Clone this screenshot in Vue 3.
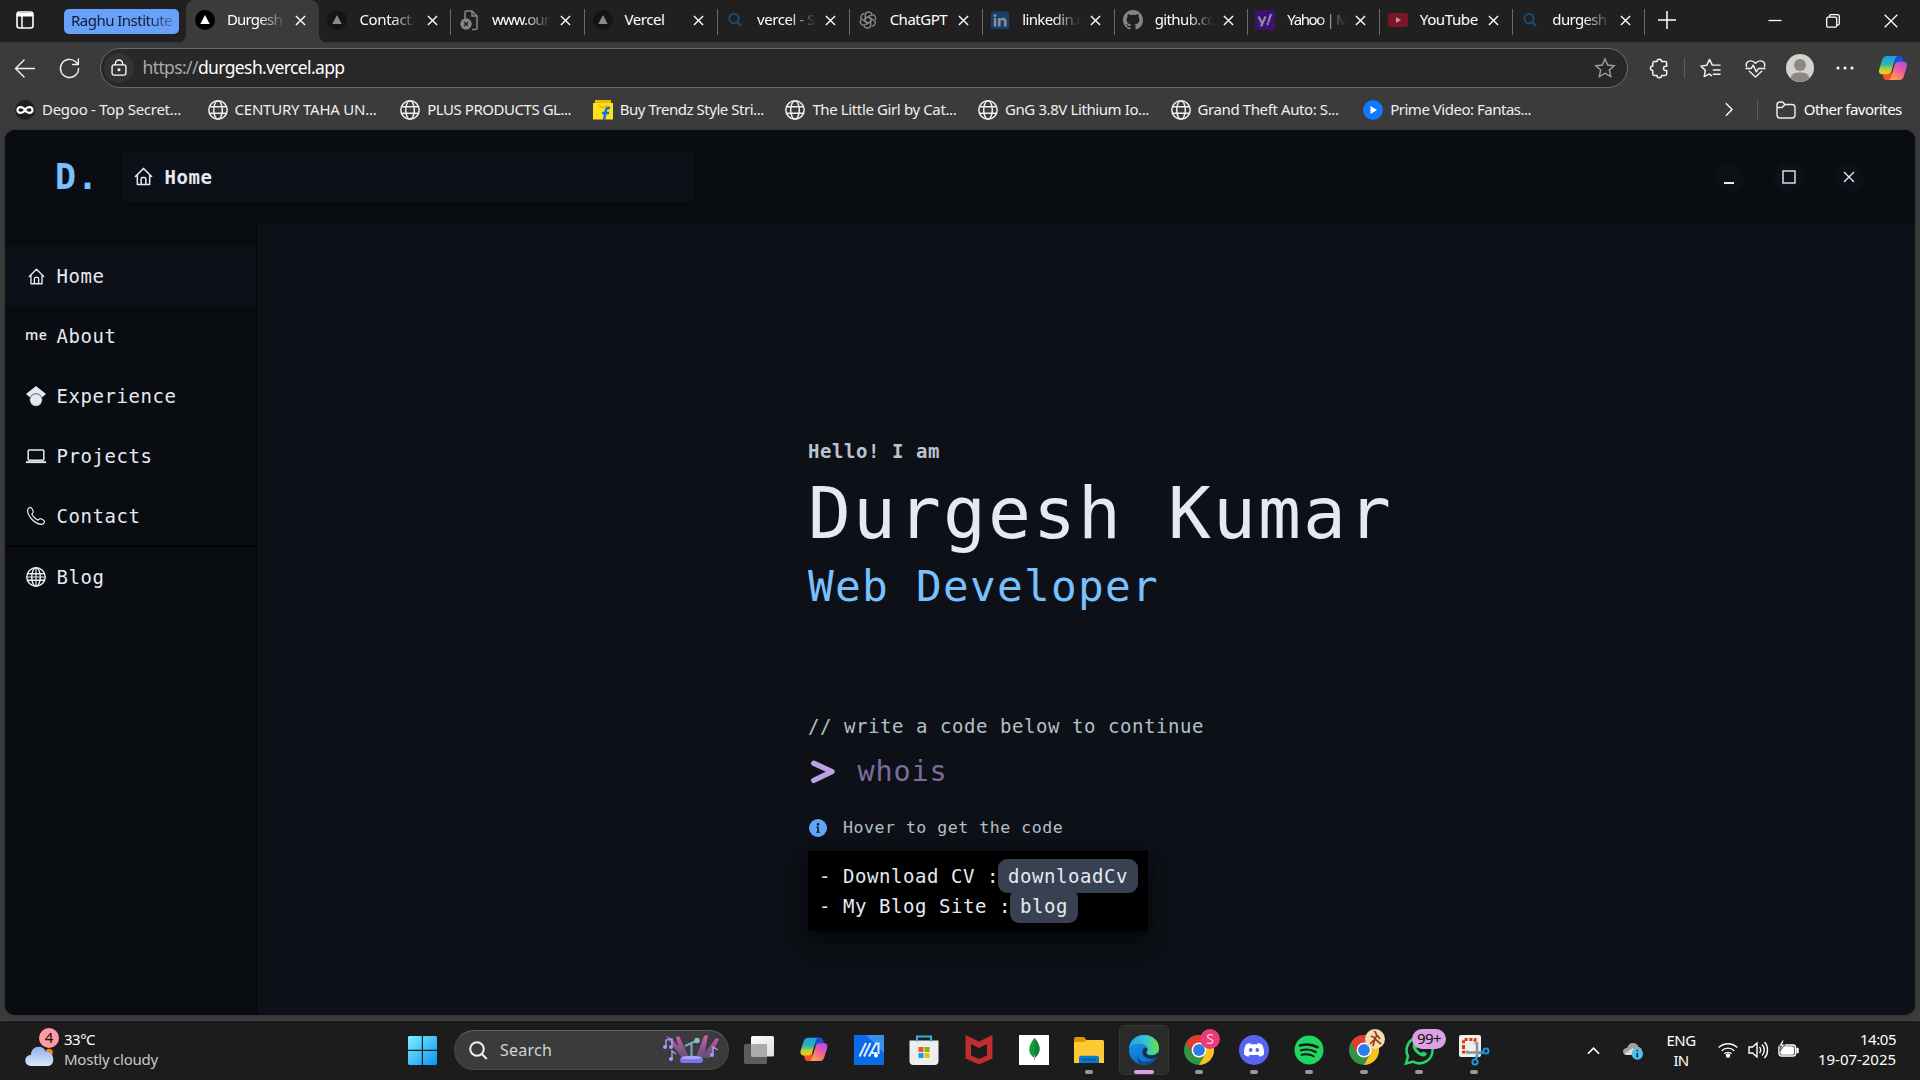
<script setup>
const vFit = {
  mounted(el, { value }) {
    if (!value) return
    const natural = el.getBoundingClientRect().width
    el.style.letterSpacing = (value - natural) / el.textContent.length + 'px'
  },
}

const triangle = (bg, fg) => `<circle cx="10" cy="10" r="10" fill="${bg}"/><path d="M10 5l4.700 9H5.300z" fill="${fg}"/>`
const globe = '<g fill="none" stroke="currentColor" stroke-width="1.500"><circle cx="10" cy="10" r="9.200"/><ellipse cx="10" cy="10" rx="4.300" ry="9.200"/><path d="M1.600 6.800h16.800M1.600 13.200h16.800"/></g>'
const search = '<g fill="none" stroke="#1d4e79" stroke-width="1.800"><circle cx="9" cy="8.500" r="4.600"/><path d="M12.300 12l4 4"/></g>'
const copilot = (k) => `<defs><linearGradient id="${k}a" x1="0" y1="0" x2="0" y2="1"><stop offset="0" stop-color="#1b9df0"/><stop offset=".45" stop-color="#2bb5a8"/><stop offset=".72" stop-color="#b4d144"/><stop offset="1" stop-color="#ffc60a"/></linearGradient><linearGradient id="${k}b" x1="1" y1="0" x2=".3" y2="1"><stop offset="0" stop-color="#a04cf5"/><stop offset=".5" stop-color="#ef5aa0"/><stop offset="1" stop-color="#ffa24a"/></linearGradient></defs><path d="M16 3h6c2 0 3 1.200 3.600 3l1 4h-4c-1.700 0-4 .8-5 3.300z" fill="#1a4ed8"/><path d="M15 28H9c-2 0-3-1.200-3.500-3L4.500 21h4.500c1.700 0 3.600-.8 4.600-3.300z" fill="#f4522d"/><path d="M9.500 3h11c-1.600.2-2.400 1.300-2.900 3l-3.600 12c-.7 2.300-2 4-4.500 4H4.300C1.300 22 .5 19.500 1.300 16.800L4.500 6.500C5.200 4.300 6.800 3 9.500 3z" fill="url(#${k}a)"/><path d="M21.500 28h-11c1.600-.2 2.400-1.300 2.900-3L17 13c.7-2.300 2-4 4.500-4h5.200c3 0 3.800 2.500 3 5.200l-3.200 10.300c-.7 2.200-2.300 3.500-5 3.500z" fill="url(#${k}b)"/>`
const chrome = '<circle cx="15" cy="15" r="15" fill="#2f9446"/><path d="M15 8h13.300A15 15 0 0 1 15 30l6.200-11z" fill="#fcc31b"/><path d="M8.500 18.700L2 7.500A15 15 0 0 1 28.300 8H15z" fill="#e33b2e"/><circle cx="15" cy="15" r="7.400" fill="#fff"/><circle cx="15" cy="15" r="5.900" fill="#2b7de9"/>'
const home = '<g fill="none" stroke="currentColor" stroke-width="1.600" stroke-linejoin="round" stroke-linecap="round"><path d="M1.500 10L10 1.500 18.500 10M3.500 8.500v10h13v-10"/><path d="M7.500 18v-5.500c0-1 .5-1.500 1.500-1.500h2c1 0 1.500.5 1.500 1.500V18"/></g>'

const tabs = [
  { t: 'Durgesh', w: 55, a: true, f: 1, i: triangle('#000', '#fff') },
  { t: 'Contact', w: 52, f: 1, i: triangle('#141414', '#8a8a8a') },
  { t: 'www.our', w: 57, f: 1, i: '<g fill="none" stroke="#858585" stroke-width="1.500"><path d="M5 9V2.500C5 1.500 5.500 1 6.500 1H12l5 5v12c0 1-.5 1.500-1.500 1.500H12M12 1v5h5"/></g><circle cx="6" cy="14" r="5.700" fill="#858585"/><path d="M4 12l4 4M8 12l-4 4" stroke="#202020" stroke-width="1.400"/>' },
  { t: 'Vercel', w: 40, i: triangle('#141414', '#8a8a8a') },
  { t: 'vercel - S', w: 58, f: 1, i: search },
  { t: 'ChatGPT', w: 57.5, i: '<g fill="none" stroke="#858585" stroke-width="1.400"><path id="gp" d="M7.200 11.700V5.500c0-2 1.600-3.500 3.500-3.500 1.400 0 2.500.7 3.100 1.800M7.200 8.500l5.500-3.100c1.700-1 3.700-.3 4.600 1.200.7 1.200.7 2.500.1 3.600"/><use href="#gp" transform="rotate(120 10 10)"/><use href="#gp" transform="rotate(240 10 10)"/><path d="M10 6.800l2.800 1.600v3.200L10 13.200l-2.800-1.600V8.400z"/></g>' },
  { t: 'linkedin.c', w: 61, f: 1, i: '<rect x="1" y="1.500" width="18" height="17.500" rx="1.500" fill="#18406c"/><g fill="#8a8f94"><circle cx="5" cy="5.500" r="1.500"/><path d="M3.800 8h2.500v8.500H3.800zM8 8h2.300v1.200C12 7 16.500 7.300 16.500 11.500v5H14v-4.600c0-2.600-3.500-2.500-3.500 0v4.600H8z"/></g>' },
  { t: 'github.co', w: 61, f: 1, i: '<path transform="scale(1.250)" fill="#858585" d="M8 0C3.580 0 0 3.580 0 8c0 3.540 2.290 6.530 5.470 7.590.4.070.55-.17.55-.38 0-.19-.01-.82-.01-1.490-2.010.37-2.530-.49-2.690-.94-.09-.23-.48-.94-.82-1.130-.28-.15-.68-.52-.01-.53.63-.01 1.080.58 1.230.82.72 1.210 1.870.87 2.330.66.07-.52.28-.87.51-1.070-1.780-.2-3.640-.89-3.640-3.950 0-.87.31-1.590.82-2.150-.08-.2-.36-1.020.08-2.120 0 0 .67-.21 2.200.82.64-.18 1.320-.27 2-.27s1.360.09 2 .27c1.530-1.040 2.200-.82 2.200-.82.44 1.100.16 1.920.08 2.120.51.56.82 1.270.82 2.150 0 3.070-1.870 3.750-3.650 3.950.29.25.54.73.54 1.480 0 1.070-.01 1.930-.01 2.200 0 .21.15.46.55.38A8 8 0 0 0 16 8c0-4.420-3.580-8-8-8z"/>' },
  { t: 'Yahoo | M', w: 61, f: 1, i: '<rect width="20" height="20" fill="#3b1273"/><path d="M3.500 6.500l3.300 6.500M10.500 6.500L6 16.500M13.200 12.500L16 4" fill="none" stroke="#918a99" stroke-width="2.200"/><circle cx="12.700" cy="14" r="1.300" fill="#918a99"/>' },
  { t: 'YouTube', w: 58, i: '<rect y="3" width="20" height="14" rx="3" fill="#7c1525"/><path d="M8 7v6l5-3z" fill="#a9a0a2"/>' },
  { t: 'durgesh', w: 54, f: 1, i: search },
]

const bookmarks = [
  { t: 'Degoo - Top Secret...', w: 139, i: '<circle cx="10" cy="10" r="10" fill="#202020"/><path d="M10 10C8 6.500 2.500 6 2.500 10S8 13.500 10 10s7.500-4 7.500 0-5.500 3.500-7.500 0z" fill="none" stroke="#fff" stroke-width="2.200"/>' },
  { t: 'CENTURY TAHA UN...', w: 142, i: globe },
  { t: 'PLUS PRODUCTS GL...', w: 144, i: globe },
  { t: 'Buy Trendz Style Stri...', w: 144, i: '<path d="M2 0h16v4H2z" fill="#f2b900"/><path d="M0 3h20v16.500H0z" fill="#ffe11b"/><path d="M6 5c1 3 6 3 8 0" fill="none" stroke="#f0b400" stroke-width="1.500"/><path d="M17 8c-3-.5-4 .5-4.300 3L11 20M9 13h7" fill="none" stroke="#1773d6" stroke-width="2.600"/>' },
  { t: 'The Little Girl by Cat...', w: 144, i: globe },
  { t: 'GnG 3.8V Lithium Io...', w: 144, i: globe },
  { t: 'Grand Theft Auto: S...', w: 141, i: globe },
  { t: 'Prime Video: Fantas...', w: 141, i: '<circle cx="10" cy="10" r="10" fill="#0f79ff"/><path d="M7.500 6v8l6.500-4z" fill="#fff"/>' },
]

const nav = [
  { t: 'Home', a: true, i: home, s: 17 },
  { t: 'About', me: true },
  { t: 'Experience', s: 20, i: '<path d="M10 0l10 8-4 3.500H4L0 8z" fill="currentColor"/><circle cx="10" cy="14" r="6.300" fill="currentColor" stroke="#090c10" stroke-width=".6"/>' },
  { t: 'Projects', s: 20, i: '<rect x="2.200" y="4" width="15.600" height="10.300" rx="1" fill="none" stroke="currentColor" stroke-width="1.500"/><path d="M0 15.200h20v1.900H0z" fill="currentColor"/>' },
  { t: 'Contact', s: 20, i: '<path d="M4.500 1.400C3.300 1.300 1.500 3 1.600 4.500 2 11 9 18 15.500 18.400c1.400.1 3-1.600 3-2.800 0-1.300-3.800-3.300-4.800-2.800l-1.800 1.300c-1.500-.4-5.500-4.200-6-6l1.200-1.800c.6-1-1.400-4.800-2.600-4.900z" fill="none" stroke="currentColor" stroke-width="1.200"/>' },
  { t: 'Blog', s: 20, line: true, i: globe.replace('<path ', '<path d="M10 1v18M1 10h18" stroke-width="1.200"/><path ') },
]

const apps = [
  { i: '<defs><linearGradient id="tv" x1="0" y1="0" x2="1" y2="1"><stop stop-color="#fff"/><stop offset="1" stop-color="#ddd"/></linearGradient></defs><rect y="9" width="23" height="20" rx="1.500" fill="#5d5d5d"/><rect x="7" y="1" width="23" height="20.500" rx="1.500" fill="url(#tv)"/><path d="M7 9h16v12.500H8.500c-1 0-1.500-.5-1.500-1.500z" fill="#ababab"/>' },
  { i: '<g transform="translate(.5 0) scale(.93)">' + copilot('t') + '</g>' },
  { i: '<rect width="30" height="30" fill="#0a6be6"/><path d="M12 0h18v18z" fill="#3c8df0"/><path d="M5.500 21.500L12 8" stroke="#dcecff" stroke-width="2"/><path d="M10 21.500L16.500 8" stroke="#dcecff" stroke-width="2"/><path d="M15 21.500L22 8.500h2.500V19M18 18h5" fill="none" stroke="#dcecff" stroke-width="2"/><circle cx="22" cy="20.500" r="2" fill="#fff"/>' },
  { i: '<path d="M8 7V1.500h14V7" fill="none" stroke="#2ab1e6" stroke-width="2"/><path d="M.5 5.500h29V26c0 2.500-1.300 4-4 4h-21c-2.700 0-4-1.500-4-4z" fill="#eee"/><path d="M9.500 12h5v5h-5z" fill="#f25022"/><path d="M15.500 12h5v5h-5z" fill="#7fba00"/><path d="M9.500 18h5v5h-5z" fill="#00a4ef"/><path d="M15.500 18h5v5h-5z" fill="#ffb900"/><path d="M8 6.500V5M22 6.500V5" stroke="#2ab1e6" stroke-width="2"/>' },
  { i: '<path d="M1.500 0L15 6.500 28.500 0v23.500L15 29.500 1.500 23.500zM7 9v11.500l8 3.500 8-3.500V9l-8 4z" fill="#c02d2d" fill-rule="evenodd"/>' },
  { i: '<path d="M0 0h30v30H0z" fill="#fff"/><path d="M15.500 3c7.500 8 6 16 0 20-7-4-7-12 0-20z" fill="#119b3d"/><path d="M15.500 3c7.500 8 6 16 0 20z" fill="#168134"/><path d="M15.500 20v5" stroke="#aaa"/>' },
  { r: 1, i: '<path d="M0 4c0-1.300.7-2 2-2h8l3 3.500V10H0z" fill="#d99a00"/><path d="M0 7h10l3-2h15c1.300 0 2 .6 2 2v21H0z" fill="#ffc933"/><path d="M5 28v-5c0-1.500.8-2.300 2.300-2.300h15.400c1.500 0 2.300.8 2.300 2.300v5z" fill="#087ad0"/><path d="M8 24.500h14" stroke="#0b5593" stroke-width="1.500"/>' },
  { r: 1, a: true, i: '<defs><linearGradient id="e1"><stop stop-color="#21a1e8"/><stop offset=".55" stop-color="#35c4d6"/><stop offset="1" stop-color="#6be33f"/></linearGradient><linearGradient id="e2" x1="0" y1="0" x2=".3" y2="1"><stop stop-color="#1fa0e4"/><stop offset="1" stop-color="#0a6fd0"/></linearGradient></defs><circle cx="15" cy="15" r="15" fill="url(#e2)"/><path d="M8.500 20C9 27 17 29.500 27.500 23A15 15 0 0 1 12 29.700C8 28 8 23 8.500 20z" fill="#104b94"/><path d="M0 13C1 5 7.500 0 15 0c9 0 15 6 15 13 0 4.500-3.500 7-7.500 7-3.500 0-5-1.300-5-2.600 0-1 1.200-1.300 1.200-3.200 0-3-3.500-5.700-7.700-5.700-5 0-9 2-11 4.500z" fill="url(#e1)"/><path d="M17.300 17.600c0 1.500 1.700 2.900 5.200 2.900 3 0 5.500-1.300 6.700-3.500.8 1.500.3 4-1.700 6-6.500 2.500-14-.2-14-6 0-2 1-3.700 2.500-4.500 1.500.2 2.600 1.200 2.600 2.400 0 1.200-1.300 1.400-1.300 2.700z" fill="#173049"/>' },
  { r: 1, b: 'S', bc: 'pink', i: chrome },
  { r: 1, i: '<circle cx="15" cy="15" r="15" fill="#5764f2"/><path d="M11 8c-2 .3-3.500 1-4 1.500-1.500 2.500-2.300 6-2 10 1.500 1.200 3 2 4.500 2.300l1-1.800h9l1 1.800c1.500-.3 3-1.100 4.500-2.300.3-4-.5-7.500-2-10-.5-.5-2-1.200-4-1.500l-.7 1.300h-6.600z" fill="#fff"/><ellipse cx="11.700" cy="15" rx="1.800" ry="2" fill="#5764f2"/><ellipse cx="18.300" cy="15" rx="1.800" ry="2" fill="#5764f2"/>' },
  { r: 1, i: '<circle cx="15" cy="15" r="14.500" fill="#1fd760"/><g fill="none" stroke="#151a17" stroke-linecap="round"><path d="M6 10.500c6-1.700 12.500-1 17.500 1.700" stroke-width="2.700"/><path d="M7 15.300c5-1.400 10.500-.8 14.700 1.700" stroke-width="2.200"/><path d="M7.500 19.700c4.500-1 8.700-.5 12.300 1.600" stroke-width="1.900"/></g>' },
  { r: 1, bc: 'cream', i: chrome },
  { r: 1, b: '99+', bc: 'lilac', i: '<path d="M2 28.500l2-7.300A13 13 0 1 1 9.200 26.600z" fill="none" stroke="#25d366" stroke-width="2.600"/><path d="M10 8c-3 2-1 7 3 10.500 4 3.300 8 4 9.500 1.200.5-1.500 0-2-3.500-3.200-1.300 1.500-1.500 1.800-4.500-.6-2.500-2.400-2.300-3-1-4.400C12 8 11 7.500 10 8z" fill="#25d366"/>' },
  { r: 1, i: '<rect width="22" height="22" rx="2" fill="#efefef"/><path d="M4.500 13V4.500H16V9M4.500 11v6H9" fill="none" stroke="#d83b01" stroke-width="3" stroke-dasharray="3 1.800"/><path d="M18 7v16M7 17.500h17" stroke="#8d949a" stroke-width="2.600"/><circle cx="27" cy="16" r="2.600" fill="none" stroke="#1b9de2" stroke-width="1.900"/><circle cx="16" cy="27" r="2.600" fill="none" stroke="#1b9de2" stroke-width="1.900"/><path d="M20 18.500l5-1.800M18 20l-1.300 5" stroke="#1b9de2" stroke-width="1.800"/>' },
]
const copilotTop = copilot('c')
</script>

<template>
  <div class="screen">
    <header class="tabstrip">
      <svg class="side" viewBox="0 0 18 18"><rect x="1" y="1" width="16" height="16" rx="2.500" fill="none" stroke="#fff" stroke-width="1.600"/><path d="M1 2h16v3.500H1z" fill="#fff"/><path d="M6 5v12" stroke="#fff" stroke-width="1.500"/></svg>
      <div class="group"><span v-fit="101">Raghu Institute</span></div>
      <div v-for="(tab, n) in tabs" :key="n" class="tab" :class="{ active: tab.a, sep: n > 0 }">
        <svg class="fav" viewBox="0 0 20 20" v-html="tab.i"></svg>
        <div class="label" :class="{ fade: tab.f }"><span v-fit="tab.w">{{ tab.t }}</span></div>
        <svg class="x" viewBox="0 0 12 12"><path d="M1 1l10 10M11 1L1 11"/></svg>
      </div>
      <svg class="plus" viewBox="0 0 18 18"><path d="M9 0v18M0 9h18"/></svg>
      <div class="wins">
        <svg viewBox="0 0 14 14"><path d="M.5 6.500h13"/></svg>
        <svg viewBox="0 0 14 14"><rect x=".7" y="3.200" width="10" height="10" rx="1.500"/><path d="M3.500 3V2c0-1 .5-1.300 1.300-1.300h6.400c1.400 0 2.100.7 2.100 2V9.500c0 1-.5 1.500-1.500 1.500h-1"/></svg>
        <svg viewBox="0 0 14 14"><path d="M.7.7l12.600 12.600M13.300.7L.7 13.300"/></svg>
      </div>
    </header>

    <div class="toolbar">
      <svg class="ico back" viewBox="0 0 22 20"><path d="M21 10H1.500M10 1L1 10l9 9"/></svg>
      <svg class="ico reload" viewBox="0 0 22 22"><path d="M20.500 11A9.500 9.500 0 1 1 17.500 4L20 6.500M20.300 1v5.800h-6"/></svg>
      <div class="address">
        <div class="lock"><svg viewBox="0 0 18 20"><rect x="1.200" y="6.500" width="15.600" height="11.500" rx="2"/><path d="M5 6.500V5a4 4 0 0 1 8 0v1.500"/><circle cx="9" cy="12" r="1" fill="#fff"/></svg></div>
        <span class="url" v-fit="202"><i>https://</i>durgesh.vercel.app</span>
        <svg class="star" viewBox="0 0 20 20"><path d="M10 1l2.700 6 6.500.7-4.900 4.300 1.400 6.500L10 15.200l-5.700 3.300L5.700 12 .8 7.700 7.300 7z"/></svg>
      </div>
      <svg class="ico puzzle" viewBox="0 0 20 20"><path d="M8 3.500a2.300 2.300 0 0 1 4.600 0h3.400c1 0 1.700.7 1.700 1.700v3h-1a2.200 2.200 0 0 0 0 4.400h1v3.200c0 1-.7 1.700-1.700 1.700h-3.400a2.300 2.300 0 0 1-4.600 0H5.500c-1 0-1.700-.7-1.700-1.700v-3.200a2.300 2.300 0 0 1 0-4.600V5.200c0-1 .7-1.700 1.700-1.700z"/></svg>
      <div class="vsep"></div>
      <svg class="ico favs" viewBox="0 0 22 20"><path d="M12 18l-2-1.800-5.600 2.800L5.600 12.500.9 8l6.200-.8L10 1l2.900 6H21M14 12h7M14 16.500h7"/></svg>
      <svg class="ico heart" viewBox="0 0 22 20"><path d="M1.500 8C0 2 7 0 11 4.500 15 0 22 2 20.500 8M1 10h5.500l2-3.500 3.500 7 2-3.500H21M4.500 13l6.500 6 6.500-6"/></svg>
      <svg class="avatar" viewBox="0 0 28 28"><circle cx="14" cy="14" r="14" fill="#d4d1ce"/><circle cx="14" cy="11" r="6" fill="#8c8985"/><path d="M4.500 24c1-4.500 5-5.500 9.500-5.500s8.500 1 9.500 5.500a14 14 0 0 1-19 0z" fill="#8c8985"/></svg>
      <svg class="dots" viewBox="0 0 18 4"><circle cx="2" cy="2" r="1.500"/><circle cx="9" cy="2" r="1.500"/><circle cx="16" cy="2" r="1.500"/></svg>
      <svg class="cop" viewBox="0 0 31 31" v-html="copilotTop"></svg>
    </div>

    <div class="bookmarks">
      <div v-for="b in bookmarks" :key="b.t" class="bm">
        <svg viewBox="0 0 20 20" v-html="b.i"></svg><span v-fit="b.w">{{ b.t }}</span>
      </div>
      <svg class="chev" viewBox="0 0 9 16"><path d="M1 1l7 7-7 7"/></svg>
      <div class="vsep"></div>
      <svg class="folder" viewBox="0 0 20 18"><path d="M1 4c0-2 1-3 3-3h2.500L9 3.500h7c2 0 3 1 3 3V14c0 2-1 3-3 3H4c-2 0-3-1-3-3zM1 6.500h5L9 3.500"/></svg>
      <span class="other" v-fit="98">Other favorites</span>
    </div>

    <div class="page">
      <div class="top">
        <div class="logo">D.</div>
        <div class="crumb"><svg viewBox="0 0 20 20" v-html="home"></svg><span>Home</span></div>
        <div class="ctl">
          <div><svg viewBox="0 0 14 14"><path d="M2 13h10" stroke-width="2"/></svg></div>
          <div><svg viewBox="0 0 14 14"><rect x="1" y="1" width="12" height="12" stroke-width="1.400"/></svg></div>
          <div><svg viewBox="0 0 14 14"><path d="M2 2l10 10M12 2L2 12" stroke-width="1.400"/></svg></div>
        </div>
      </div>
      <div class="body">
        <nav>
          <div v-for="n in nav" :key="n.t" class="item" :class="{ on: n.a, line: n.line }">
            <div class="ic"><span v-if="n.me" class="me">me</span><svg v-else viewBox="0 0 20 20" :width="n.s" :height="n.s" v-html="n.i"></svg></div>
            <span>{{ n.t }}</span>
          </div>
        </nav>
        <main>
          <div class="hello">Hello! I am</div>
          <h1>Durgesh Kumar</h1>
          <h2>Web Developer</h2>
          <div class="comment">// write a code below to continue</div>
          <div class="prompt"><svg viewBox="0 0 24 24"><path d="M2.800 3.200L21 11.600 2.800 20.400"/></svg><span>whois</span></div>
          <div class="hint"><svg viewBox="0 0 18 18"><circle cx="9" cy="9" r="9" fill="#60a5fa"/><circle cx="9" cy="5.200" r="1.200"/><path d="M7.400 7.600h2.400v5.200h1v1H7.300v-1h1V8.600h-.9z"/></svg><span>Hover to get the code</span></div>
          <div class="codes">
            <div>- Download CV :<b>downloadCv</b></div>
            <div>- My Blog Site :<b>blog</b></div>
          </div>
        </main>
      </div>
    </div>

    <footer>
      <div class="weather">
        <svg viewBox="0 0 32 24"><defs><linearGradient id="cl" x1="0" y1="0" x2="0" y2="1"><stop stop-color="#8fb0ea"/><stop offset="1" stop-color="#dce8fa"/></linearGradient></defs><circle cx="26" cy="8" r="4" fill="#f7820a"/><path d="M7 23c-4 0-7-2.300-7-6 0-3.600 2.600-6 6-6C6.500 5 10 2 14.500 2c4 0 6.500 2 7.800 5.300C27 7 30.500 10.500 30.500 15.500c0 5-3 7.500-7 7.500z" fill="url(#cl)"/></svg>
        <em>4</em>
        <div><span class="w1" v-fit="31">33°C</span><span class="w2" v-fit="94">Mostly cloudy</span></div>
      </div>
      <svg class="win" viewBox="0 0 29 29"><defs><linearGradient id="wg" x1="0" y1="0" x2="1" y2="1"><stop stop-color="#7cf0ff"/><stop offset="1" stop-color="#0a93f7"/></linearGradient></defs><path d="M1 0h12.800v13.800H0V1zM15 0h13l1 1v12.800H15zM0 15h13.800v14H1l-1-1zM15 15h14v13l-1 1H15z" fill="url(#wg)"/></svg>
      <div class="search">
        <svg class="mag" viewBox="0 0 19 19"><circle cx="8" cy="8" r="6.800"/><path d="M12.800 13l5 5"/></svg>
        <span v-fit="52">Search</span>
        <svg class="art" viewBox="0 0 56 28"><defs><linearGradient id="bm" x1="0" y1="0" x2="0" y2="1"><stop stop-color="#d65eb5"/><stop offset="1" stop-color="#7c5c94" stop-opacity=".6"/></linearGradient></defs><path d="M3 0l5 2 17 19h-7zM13 1l3-1 10 21h-8zM41 0l4-1-4 22h-8zM53 2l3 1-9 19h-9z" fill="url(#bm)"/><rect x="17" y="21" width="23" height="6" rx="3" fill="#7b74ee"/><ellipse cx="28.500" cy="21.500" rx="10" ry="1.700" fill="#a9a8ff"/><path d="M28.500 21V8M22 10l11-5" stroke="#74a9c5" stroke-width="2"/><circle cx="34" cy="4.500" r="2.800" fill="#84bdd2"/><g fill="none" stroke="#a99bf2" stroke-width="1.400"><path d="M3 11V4l6-1v8M9 23v-8l4 3M50 19v-8l5 3"/></g><g fill="#a99bf2"><circle cx="2" cy="11" r="2"/><circle cx="8" cy="11" r="2"/><circle cx="8" cy="23" r="2"/><circle cx="49" cy="19" r="2"/></g></svg>
      </div>
      <div class="apps">
        <div v-for="(a, n) in apps" :key="n" class="app" :class="{ run: a.r, cur: a.a }">
          <svg viewBox="0 0 30 30" v-html="a.i"></svg>
          <em v-if="a.b" :class="a.bc">{{ a.b }}</em>
          <em v-else-if="a.bc" :class="a.bc"><svg viewBox="0 0 20 20"><path d="M9 2c3 2 3 5 1 8l-5 5M10 10l6 5M10 9l-2 8M6 7l4 2M12 6l3 4" fill="none" stroke="#9b3c17" stroke-width="1.700"/></svg></em>
        </div>
      </div>
      <div class="tray">
        <svg class="up" viewBox="0 0 14 9"><path d="M1 8l6-6 6 6"/></svg>
        <svg class="od" viewBox="0 0 20 18"><path d="M4 13c-2.500 0-4-1.500-4-3.500S2 6 4 6c1-3 3-5 6-5s5 2 5.500 4c2.500.5 3.500 2 3.500 4v4z" fill="#a2a2a2"/><path d="M1 12l9-6 2 7H4z" fill="#dedede"/><circle cx="14.300" cy="12" r="5.700" fill="#50bff5"/><path d="M14.300 11v4.500M14.300 8v1.500" stroke="#102c3a" stroke-width="1.600"/></svg>
        <div class="lang"><span v-fit="29">ENG</span><span v-fit="15">IN</span></div>
        <svg class="wifi" viewBox="0 0 20 16"><path d="M.7 5.500a13.500 13.500 0 0 1 18.600 0M3.700 8.700a9 9 0 0 1 12.600 0M6.500 11.800a5 5 0 0 1 7 0"/><circle cx="10" cy="13.500" r="1.500" fill="#fff"/></svg>
        <svg class="vol" viewBox="0 0 20 18"><path d="M1 6h3.500L9 2v14l-4.500-4H1zM11.500 6c1.500 1.500 1.500 4.500 0 6M14 3.500c3 3 3 8 0 11M16.500 1c4 4 4 12 0 16"/></svg>
        <svg class="bat" viewBox="0 0 21 18"><rect x="1" y="5" width="16.500" height="11" rx="2.500"/><rect x="3" y="7" width="12.500" height="7" rx="1" fill="#fff"/><path d="M19 8.500h1v4h-1z" fill="#fff"/><path d="M4.500 0L1 6h2.500L2 11l5-6.500H4.500L6 0z" fill="#fff" stroke="#1c1c1c" stroke-width=".7"/></svg>
        <div class="clock"><span v-fit="36">14:05</span><span v-fit="78">19-07-2025</span></div>
      </div>
    </footer>
  </div>
</template>

<style>
body { margin: 0; background: #3b3b3b; overflow: hidden; }
</style>

<style scoped>
* { box-sizing: border-box; }
svg { display: block; flex: none; overflow: visible; }
.screen { width: 1920px; height: 1080px; display: flex; flex-direction: column; background: #3b3b3b; color: #fff; font: 15px/20px "Noto Sans", "Open Sans", sans-serif; overflow: hidden; white-space: nowrap; }
.tabstrip { height: 43px; flex: none; background: #202020; display: flex; padding-left: 16px; border-bottom: 1px solid #333; }
.side { width: 18px; height: 18px; margin-top: 11px; }
.group { width: 115px; height: 25px; margin: 9px 7.400px 0 30px; background: #69a1fa; color: #101c30; border-radius: 5px; padding: 1px 7px; }
.group span { -webkit-mask-image: linear-gradient(90deg, #000 75%, #0005); mask-image: linear-gradient(90deg, #000 75%, #0005); display: inline-block; }
.tab { width: 132.550px; height: 42px; flex: none; display: flex; align-items: center; padding: 0 0 2px 8.500px; position: relative; }
.tab.active { background: #3b3b3b; height: 43px; border-radius: 9px 9px 0 0; padding-bottom: 3px; }
.tab.active::before, .tab.active::after { content: ""; position: absolute; bottom: 0; width: 8px; height: 8px; }
.tab.active::before { left: -8px; background: radial-gradient(circle at 0 0, transparent 7.500px, #3b3b3b 8px); }
.tab.active::after { right: -8px; background: radial-gradient(circle at 100% 0, transparent 7.500px, #3b3b3b 8px); }
.tab.sep::after { content: ""; position: absolute; right: -1px; top: 9px; height: 26px; width: 1px; background: #6a6a6a; }
.tab.sep:nth-child(4)::after { right: 0; }
.fav { width: 20px; height: 20px; }
.label { width: 62px; margin: 0 8px 2px 12px; }
.label span { display: inline-block; }
.fade { -webkit-mask-image: linear-gradient(90deg, #000 50%, transparent 95%); mask-image: linear-gradient(90deg, #000 50%, transparent 95%); }
.x { width: 11px; height: 11px; fill: none; stroke: #fff; stroke-width: 1.500; margin-top: 1px; margin-left: -2px; }
.plus { width: 18px; height: 18px; margin: 11px 0 0 14px; stroke: #fff; stroke-width: 1.500; }
.wins { margin-left: auto; margin-right: 22px; margin-top: 14px; display: flex; gap: 44px; }
.wins svg { width: 14px; height: 14px; fill: none; stroke: #fff; stroke-width: 1.300; }
.toolbar { height: 50px; flex: none; display: flex; align-items: center; padding-left: 14px; }
.ico { fill: none; stroke: #f2f2f2; stroke-width: 1.500; stroke-linejoin: round; stroke-linecap: round; }
.back { width: 22px; height: 19px; }
.reload { width: 21px; height: 21px; margin-left: 23px; }
.address { width: 1528px; height: 40px; margin-left: 20px; border: 1px solid #6c6c6c; border-radius: 20px; background: #282828; display: flex; align-items: center; }
.lock { width: 30px; height: 30px; margin-left: 3px; border-radius: 50%; background: #333; display: flex; align-items: center; justify-content: center; }
.lock svg { width: 16px; height: 18px; fill: none; stroke: #fff; stroke-width: 1.500; margin-top: -1px; }
.url { font-size: 17.500px; margin: 0 0 2px 8.500px; }
.url i { font-style: normal; color: #a9a9a9; }
.star { width: 20px; height: 20px; margin-left: auto; margin-right: 12px; fill: none; stroke: #a0a0a0; stroke-width: 1.400; }
.puzzle { width: 20px; height: 20px; margin-left: 21px; }
.vsep { width: 1px; height: 20px; background: #5c5c5c; }
.toolbar .vsep { margin-left: 15px; }
.favs { width: 21px; height: 20px; margin-left: 15px; }
.heart { width: 21px; height: 19px; margin-left: 24px; }
.avatar { width: 28px; height: 28px; margin-left: 20px; }
.dots { width: 18px; height: 4px; margin-left: 22px; fill: #fff; }
.cop { width: 30px; height: 30px; margin-left: 24px; }
.bookmarks { height: 37px; flex: none; display: flex; align-items: center; padding: 0 0 4px 15px; }
.bm { display: flex; align-items: center; width: 192.600px; flex: none; color: #f0f0f0; }
.bm svg { width: 20px; height: 20px; margin-right: 7px; color: #f0f0f0; }
.bm span, .other { margin-bottom: 2px; }
.chev { width: 8px; height: 15px; margin-left: 169px; fill: none; stroke: #fff; stroke-width: 1.500; }
.bookmarks .vsep { margin-left: 24px; }
.folder { width: 20px; height: 18px; margin: 0 8px 0 18px; fill: none; stroke: #f0f0f0; stroke-width: 1.400; }
.page { width: 1910px; height: 885px; margin: 0 5px; flex: none; border-radius: 10px; overflow: hidden; background: #0d1117; color: #e6e9f3; display: flex; flex-direction: column; box-shadow: 0 0 2px #222; font-family: "DejaVu Sans Mono", monospace; font-size: 19px; }
.logo, .crumb span, .item > span, .hello, h1, h2, .comment, .prompt span, .hint span, .codes { letter-spacing: .0296em; }
.top { height: 94px; flex: none; background: #090c10; border-bottom: 1px solid #05070a; display: flex; align-items: center; }
.logo { width: 66px; margin-left: 50px; font-size: 35px; line-height: 40px; font-weight: bold; color: #79c0ff; }
.crumb { width: 575px; height: 52px; border: 1px solid #07090c; border-radius: 2px; background: #0d1117; display: flex; align-items: center; font-weight: bold; padding-left: 12px; }
.crumb svg { width: 19px; height: 19px; margin-right: 11.500px; }
.ctl { display: flex; gap: 30px; margin-left: auto; margin-right: 51px; }
.ctl div { width: 30px; height: 30px; border-radius: 50%; background: #0d1017; display: flex; align-items: center; justify-content: center; }
.ctl svg { width: 14px; height: 14px; fill: none; stroke: #e6e9f3; }
.body { flex: 1; display: flex; }
nav { width: 252px; background: #090c10; border: solid #06080b; border-width: 1px 1px 0 0; padding-top: 21px; }
.item { height: 60px; display: flex; align-items: center; padding-left: 21px; }
.item.on { background: #0d1117; }
.item.line { border-top: 1px solid #000; height: 61px; }
.ic { width: 20px; margin-right: 10.500px; display: flex; justify-content: center; }
.me { font: 600 14px/16px "Open Sans", sans-serif; letter-spacing: .2px; margin-top: -3px; }
main { padding-left: 551px; padding-top: 212px; }
.hello { font-weight: bold; color: #b8c4d0; line-height: 30px; }
h1 { margin: 10px 0 0; font-weight: normal; font-size: 71.250px; line-height: 75px; }
h2 { margin: 10px 0 0; font-weight: normal; font-size: 42.750px; line-height: 50px; color: #79c0ff; }
.comment { margin-top: 100px; line-height: 30px; color: #b1c0c8; }
.prompt { display: flex; align-items: center; height: 40px; margin-top: 11px; font-size: 28.500px; color: #7a6b9c; }
.prompt svg { width: 24px; height: 24px; margin: 0 22.500px 0 3px; fill: none; stroke: #b9a1e3; stroke-width: 5.400; stroke-linejoin: round; stroke-linecap: round; }
.hint { display: flex; align-items: center; height: 30px; margin-top: 21px; font-size: 16.600px; color: #b1c0c8; }
.hint svg { width: 18px; height: 18px; margin: 0 16px 0 1px; fill: #0d1117; }
.codes { width: 340px; height: 80px; margin-top: 8px; background: #000; padding: 10px 11px; line-height: 30px; box-shadow: 0 12px 18px -3px #05070a, 0 4px 8px -4px #05070a; }
.codes div { height: 30px; }
.codes b { font-weight: normal; background: #374151; border-radius: 9px; padding: 6px 10px; margin-left: -1px; }
footer { height: 59px; flex: none; margin-top: 6px; background: #1c1c1c; display: flex; align-items: center; position: relative; box-shadow: 0 -1px #454545; padding-bottom: 1px; }
.weather { width: 383px; padding-left: 25px; display: flex; position: relative; color: #fff; }
.weather svg { width: 30px; height: 22px; margin: 14px 9px 0 0; }
.weather em { position: absolute; left: 39px; top: -3px; width: 20px; height: 20px; border-radius: 50%; background: #ff99a4; color: #111; text-align: center; font-style: normal; line-height: 19px; }
.weather div { display: flex; flex-direction: column; align-items: flex-start; margin-top: -2px; }
.w2 { color: #c8c8c8; }
.win { width: 29px; height: 29px; margin-left: 25px; }
.search { width: 275px; height: 40px; margin-left: 17px; border-radius: 20px; background: #3b3b3b; border: 1px solid #484848; border-top-color: #626262; display: flex; align-items: center; color: #d4d4d4; font-size: 16px; }
.mag { width: 19px; height: 19px; margin: 0 12px 0 14px; fill: none; stroke: #f0f0f0; stroke-width: 2; }
.art { width: 56px; height: 28px; margin-left: auto; margin-right: 9px; }
.apps { display: flex; gap: 5px; margin-left: 5px; }
.app { width: 50px; height: 50px; border: 1px solid transparent; border-radius: 5px; display: flex; align-items: center; justify-content: center; position: relative; }
.app > svg { width: 30px; height: 30px; }
.app.cur { background: #2a2a2a; border-color: #353535; }
.run::after { content: ""; position: absolute; left: 20px; bottom: 0; width: 8px; height: 4px; border-radius: 2px; background: #9a9a9a; }
.cur.run::after { left: 14px; width: 20px; background: #dca0e4; }
.app em { position: absolute; left: 25px; top: 3px; width: 20px; height: 20px; border-radius: 10px; text-align: center; font-style: normal; font-size: 14px; }
.pink { background: #e93b77; color: #ffd4e3; }
.cream { background: #f3ddb7; }
.cream svg { width: 20px; height: 20px; }
.app em.lilac { width: 34px; left: 17px; background: #dca0e4; color: #111; font-size: 15px; line-height: 19px; letter-spacing: -.5px; }
.tray { flex: 1; display: flex; align-items: center; padding-right: 24px; }
.tray svg { fill: none; stroke: #fff; stroke-width: 1.400; }
.up { width: 13px; height: 9px; margin-left: 88px; stroke-width: 1.800 !important; }
.tray .od { width: 20px; height: 18px; margin-left: 23px; stroke: none; margin-top: 2px; }
.lang { display: flex; flex-direction: column; align-items: center; width: 30px; margin: -1px 0 0 23px; }
.wifi { width: 20px; height: 16px; margin-left: 22px; }
.vol { width: 20px; height: 18px; margin-left: 10px; }
.bat { width: 21px; height: 18px; margin-left: 10px; margin-top: -2px; }
.clock { margin: -2px 0 0 auto; display: flex; flex-direction: column; align-items: flex-end; }
</style>
